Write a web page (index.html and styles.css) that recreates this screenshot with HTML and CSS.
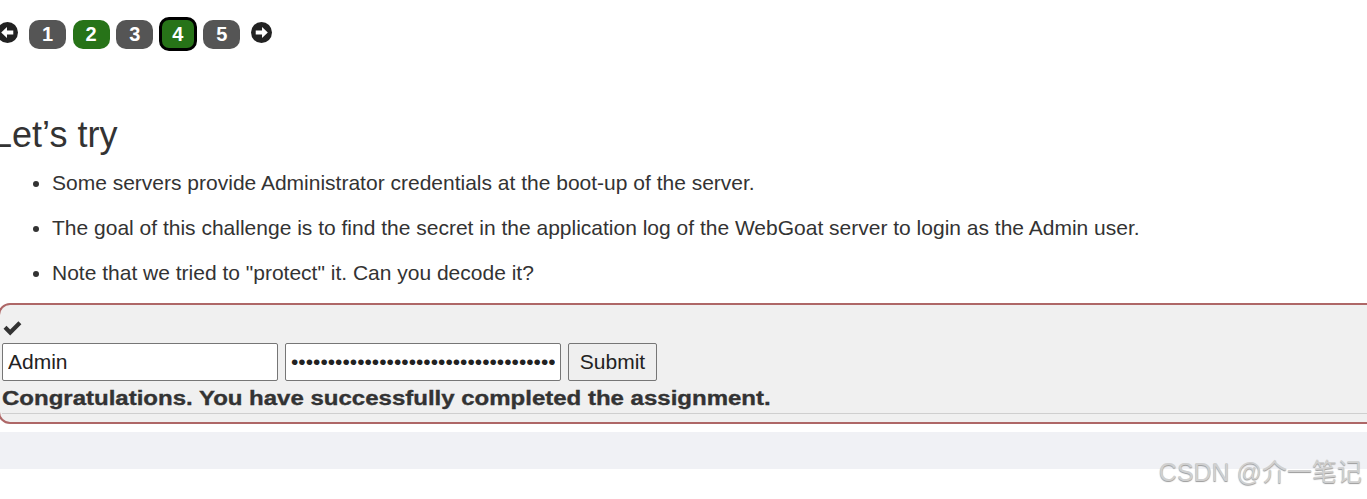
FILE: index.html
```html
<!DOCTYPE html>
<html>
<head>
<meta charset="utf-8">
<link rel="stylesheet" href="styles.css">
</head>
<body>
<div class="page">
  <div class="pager">
    <span class="arrow arrow-left">
      <svg viewBox="0 0 20 20" width="21" height="21"><circle cx="10" cy="10" r="10" fill="#222"/><path d="M4 10 L9.5 4.8 L9.5 8 L15.5 8 L15.5 12 L9.5 12 L9.5 15.2 Z" fill="#fff"/></svg>
    </span>
    <a class="page-link">1</a>
    <a class="page-link solved">2</a>
    <a class="page-link">3</a>
    <a class="page-link solved current">4</a>
    <a class="page-link">5</a>
    <span class="arrow arrow-right">
      <svg viewBox="0 0 20 20" width="21" height="21"><circle cx="10" cy="10" r="10" fill="#222"/><path d="M16 10 L10.5 4.8 L10.5 8 L4.5 8 L4.5 12 L10.5 12 L10.5 15.2 Z" fill="#fff"/></svg>
    </span>
  </div>

  <h2 class="title">Let’s try</h2>
  <ul class="points">
    <li>Some servers provide Administrator credentials at the boot-up of the server.</li>
    <li>The goal of this challenge is to find the secret in the application log of the WebGoat server to login as the Admin user.</li>
    <li>Note that we tried to "protect" it. Can you decode it?</li>
  </ul>

  <div class="attack-container">
    <div class="check">
      <svg viewBox="0 0 18 15" width="19" height="16"><path d="M0.5 8.2 L3.3 5.4 L6.8 8.9 L14.6 1.1 L17.4 3.9 L6.8 14.5 Z" fill="#333"/></svg>
    </div>
    <form class="attack-form">
      <input class="field" type="text" value="Admin">
      <input class="field" type="password" value="xxxxxxxxxxxxxxxxxxxxxxxxxxxxxxxxxxxxxxxxxxxx">
      <button class="submit" type="button">Submit</button>
    </form>
    <div class="feedback"><span class="feedback-text">Congratulations. You have successfully completed the assignment.</span></div>
    <div class="rule"></div>
  </div>

  <div class="band"></div>
</div>
<div class="watermark">CSDN @介一笔记</div>
</body>
</html>
```

FILE: styles.css
```css
html, body {
  margin: 0;
  padding: 0;
  background: #fff;
}
body {
  font-family: "Liberation Sans", Arial, "Noto Sans CJK SC", sans-serif;
  color: #333;
  overflow: hidden;
  height: 499px;
  position: relative;
}
.page {
  margin-left: -4px;
  margin-right: -12px;
}
.pager {
  display: flex;
  align-items: center;
  padding-top: 17px;
  height: 34px;
}
.arrow {
  display: flex;
  width: 21px;
  height: 21px;
  margin-top: -3px;
}
.arrow-left {
  margin-left: 1px;
  margin-right: 11px;
}
.arrow-right {
  margin-left: 4.5px;
}
.page-link {
  display: flex;
  align-items: center;
  justify-content: center;
  width: 37px;
  height: 29px;
  margin-right: 6.6px;
  border-radius: 10px;
  background: #555;
  color: #fff;
  font-weight: bold;
  font-size: 20px;
}
.page-link.solved {
  background: #277318;
}
.page-link.current {
  width: 32px;
  height: 28px;
  border: 3px solid #000;
  margin-left: -1px;
}
.title {
  margin: 64px 0 0 -4px;
  font-weight: normal;
  font-size: 36px;
  line-height: 40px;
}
.points {
  margin: 15px 0 0;
  padding-left: 56px;
  font-size: 21px;
  line-height: 25px;
}
.points li {
  margin-bottom: 20px;
}
.attack-container {
  margin: -2px 0 0 2px;
  border: 2px solid #ae6767;
  border-radius: 12px;
  background: #f0f0f0;
  padding: 13px 0 0 2px;
  height: 104px;
}
.check {
  height: 25px;
  padding-left: 1px;
  display: flex;
  align-items: flex-start;
  padding-top: 2px;
  box-sizing: border-box;
}
.attack-form {
  display: flex;
  gap: 7px;
  margin: 0;
}
.field {
  width: 276px;
  height: 38px;
  box-sizing: border-box;
  border: 1px solid #767676;
  border-radius: 2px;
  background: #fff;
  font-family: "Liberation Sans", Arial, sans-serif;
  font-size: 21px;
  color: #222;
  padding: 0 5px;
  margin: 0;
}
.submit {
  height: 38px;
  width: 89px;
  box-sizing: border-box;
  border: 1px solid #767676;
  border-radius: 2px;
  background: #efefef;
  font-family: "Liberation Sans", Arial, sans-serif;
  font-size: 21px;
  color: #222;
  padding: 0;
  margin: 0;
}
.feedback {
  font-weight: bold;
  font-size: 20px;
  line-height: 24px;
  padding-top: 5px;
}
.feedback-text {
  display: inline-block;
  transform: scaleX(1.2);
  transform-origin: left center;
  -webkit-text-stroke: 0.35px #333;
}
.rule {
  border-top: 1px solid #cfcfcf;
  margin-top: 3px;
}
.band {
  margin-top: 8px;
  height: 37px;
  background: #f0f1f5;
}
.watermark {
  position: absolute;
  right: 5px;
  top: 457px;
  font-size: 25px;
  line-height: 30px;
  color: #d0d0d0;
  text-shadow: 0 1px 1px #9a9a9a;
  font-family: "Liberation Sans", Arial, "Noto Sans CJK SC", sans-serif;
}
```
